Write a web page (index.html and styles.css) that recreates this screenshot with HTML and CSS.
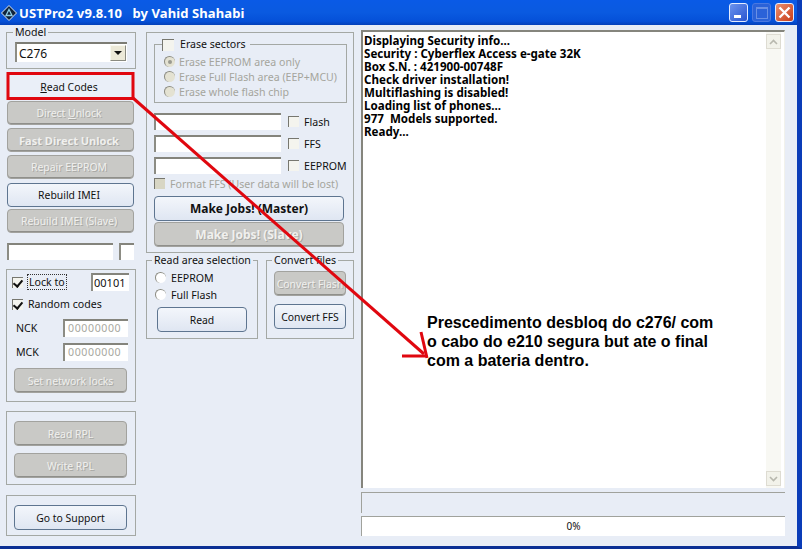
FILE: index.html
```html
<!DOCTYPE html>
<html lang="en">
<head>
    <meta charset="UTF-8">
    <title>USTPro2</title>
    <link rel="stylesheet" href="styles.css">
</head>
<body>

    <div class="window">
        <div class="titlebar">
            <svg class="app-icon" width="16" height="16" viewBox="0 0 16 16">
                <path d="M8 0.5 L15.5 8 L8 15.5 L0.5 8 Z" fill="#10243c" stroke="#dfe8f4" stroke-width="1"/>
                <path d="M8 4.5 L11 10.5 L5 10.5 Z" fill="none" stroke="#8fd0e8" stroke-width="1.3"/>
            </svg>
            <span class="title-text">USTPro2 v9.8.10&nbsp;&nbsp; by Vahid Shahabi</span>
            <div class="win-btns">
                <div class="win-btn min"><span class="min-bar"></span></div>
                <div class="win-btn max"><span class="max-box"></span></div>
                <div class="win-btn close">
                    <svg width="13" height="13" viewBox="0 0 13 13"><path d="M1.5 1.5 L11.5 11.5 M11.5 1.5 L1.5 11.5" stroke="#fff" stroke-width="2.4"/></svg>
                </div>
            </div>
        </div>

        <div class="client">
            <div class="col-left">
                <fieldset class="group model-group">
                    <legend>Model</legend>
                    <div class="combo">
                        <span class="combo-value">C276</span>
                        <span class="combo-btn"><span class="combo-arrow"></span></span>
                    </div>
                </fieldset>

                <button class="btn side read-codes"><u>R</u>ead Codes</button>
                <button class="btn side off direct">Direct <u>U</u>nlock</button>
                <button class="btn side off bold fast">Fast Direct Unlock</button>
                <button class="btn side off repair">Repair EEPROM</button>
                <button class="btn side rebuild">Rebuild IMEI</button>
                <button class="btn side off rebuild-slave">Rebuild IMEI (Slave)</button>

                <div class="imei-row">
                    <div class="field imei-a"></div>
                    <div class="field imei-b"></div>
                </div>

                <div class="box lock-box">
                    <div class="lock-row">
                        <label class="check-row"><span class="check on"></span><span class="focus-label">Lock to</span></label>
                        <div class="field lock-code">00101</div>
                    </div>
                    <label class="check-row random-row"><span class="check on"></span>Random codes</label>
                    <div class="code-row nck-row"><span>NCK</span><div class="field code-field">00000000</div></div>
                    <div class="code-row mck-row"><span>MCK</span><div class="field code-field">00000000</div></div>
                    <button class="btn off inner set-locks">Set network locks</button>
                </div>

                <div class="box rpl-box">
                    <button class="btn off inner">Read RPL</button>
                    <button class="btn off inner">Write RPL</button>
                </div>

                <div class="box support-box">
                    <button class="btn inner">Go to Support</button>
                </div>
            </div>

            <div class="col-mid">
                <div class="box main-box">
                    <fieldset class="group erase-group">
                        <legend><span class="check"></span>Erase sectors</legend>
                        <div class="radio-row dim"><span class="radio dot"></span>Erase EEPROM area only</div>
                        <div class="radio-row dim"><span class="radio"></span>Erase Full Flash area (EEP+MCU)</div>
                        <div class="radio-row dim"><span class="radio"></span>Erase whole flash chip</div>
                    </fieldset>

                    <div class="file-row"><div class="field file-field"></div><span class="check"></span>Flash</div>
                    <div class="file-row"><div class="field file-field"></div><span class="check"></span>FFS</div>
                    <div class="file-row"><div class="field file-field"></div><span class="check"></span>EEPROM</div>

                    <div class="format-row dim"><span class="check gray"></span>Format FFS (User data will be lost)</div>

                    <button class="btn bold jobs">Make Jobs! (Master)</button>
                    <button class="btn off bold jobs slave">Make Jobs! (Slave)</button>
                </div>

                <div class="mid-bottom">
                    <fieldset class="group area-group">
                        <legend>Read area selection</legend>
                        <div class="radio-row plain"><span class="radio white"></span>EEPROM</div>
                        <div class="radio-row plain"><span class="radio white"></span>Full Flash</div>
                        <button class="btn read-btn">Read</button>
                    </fieldset>
                    <fieldset class="group convert-group">
                        <legend>Convert files</legend>
                        <button class="btn off convert">Convert Flash</button>
                        <button class="btn convert ffs">Convert FFS</button>
                    </fieldset>
                </div>
            </div>

            <div class="col-right">
                <div class="log">
                    <div class="log-text">
                        Displaying Security info...<br>
                        Security : Cyberflex Access e-gate 32K<br>
                        Box S.N. : 421900-00748F<br>
                        Check driver installation!<br>
                        Multiflashing is disabled!<br>
                        Loading list of phones...<br>
                        977&nbsp; Models supported.<br>
                        Ready...
                    </div>
                    <div class="scrollbar">
                        <div class="scroll-btn">
                            <svg width="9" height="6" viewBox="0 0 9 6"><path d="M1 5 L4.5 1.5 L8 5" fill="none" stroke="#b8b8ae" stroke-width="1.6"/></svg>
                        </div>
                        <div class="scroll-btn">
                            <svg width="9" height="6" viewBox="0 0 9 6"><path d="M1 1 L4.5 4.5 L8 1" fill="none" stroke="#b8b8ae" stroke-width="1.6"/></svg>
                        </div>
                    </div>
                </div>
                <div class="status"></div>
                <div class="progress">0%</div>
            </div>
        </div>

        <!-- drawn on top of the screenshot -->
        <svg class="marks" width="802" height="549" viewBox="0 0 802 549">
            <rect x="8" y="73.5" width="125" height="25" fill="none" stroke="#e0070f" stroke-width="3"/>
            <path d="M133 98 L424 354" fill="none" stroke="#e0070f" stroke-width="3"/>
            <path d="M421 332 L427 358 M402 356 L427 356" fill="none" stroke="#e0070f" stroke-width="3"/>
        </svg>
        <p class="note">Prescedimento desbloq do c276/ com<br>o cabo do e210 segura but ate o final<br>com a bateria dentro.</p>
    </div>

</body>
</html>
```

FILE: styles.css
```css
* {
    box-sizing: border-box;
}

body {
    margin: 0;
    font-family: "Noto Sans", sans-serif;
    font-size: 10.6px;
    color: #111;
}

.window {
    position: relative;
    width: 802px;
    height: 549px;
    overflow: hidden;
    background: #e8edf6;
    border-right: 5px solid #0a3cb8;
    border-bottom: 3px solid #0b2f94;
}

.titlebar {
    display: flex;
    align-items: center;
    height: 25px;
    padding-left: 1px;
    background: linear-gradient(#0a5ae6 0%, #0a5ae0 50%, #0550d8 85%, #0440b8 100%);
}

.app-icon {
    flex: none;
}

.title-text {
    margin-left: 2px;
    color: #fff;
    font-size: 13px;
    font-weight: bold;
    letter-spacing: 0.1px;
    white-space: pre;
}

.win-btns {
    display: flex;
    gap: 4px;
    margin-left: auto;
    margin-right: 3px;
}

.win-btn {
    display: flex;
    align-items: center;
    justify-content: center;
    width: 19px;
    height: 19px;
    border: 1px solid #e4ecff;
    border-radius: 3px;
}

.min {
    align-items: flex-end;
    justify-content: flex-start;
    padding: 0 0 3px 4px;
    background: linear-gradient(135deg, #6b93ee, #2a55d0);
}

.min-bar {
    width: 7px;
    height: 3px;
    background: #fff;
}

.max {
    border-color: #4a78e0;
    background: #2b62d8;
}

.max-box {
    width: 12px;
    height: 12px;
    border: 1px solid #6a90e4;
    border-top-width: 2px;
}

.close {
    background: linear-gradient(135deg, #ea9070, #c83c18);
}

.client {
    display: flex;
    height: 521px;
    padding: 1px 0 0 6px;
}

.col-left {
    flex: none;
    width: 130px;
}

.col-mid {
    flex: none;
    width: 208px;
    margin-left: 10px;
}

.col-right {
    flex: none;
    width: 424px;
    margin-left: 7px;
    padding-top: 4px;
}

/* group boxes */
.group {
    margin: 0;
    padding: 0;
    border: 1px solid #a4a8a4;
    min-width: 0;
}

.group legend {
    margin-left: 5px;
    padding: 0 2px;
    line-height: 13px;
    white-space: nowrap;
}

.box {
    border: 1px solid #a4a8a4;
}

.model-group {
    height: 43px;
    padding: 3px 8px 0;
}

.model-group legend {
    margin-left: -2px;
}

.combo {
    display: flex;
    align-items: center;
    justify-content: space-between;
    width: 112px;
    height: 20px;
    padding: 1px 1px 1px 2px;
    background: #fff;
    border-top: 2px solid #7c7c74;
    border-left: 2px solid #8c8c84;
    font-size: 12px;
}

.combo-btn {
    display: flex;
    align-items: center;
    justify-content: center;
    width: 16px;
    height: 16px;
    background: #ece9d8;
    border: 1px solid #8a8a80;
    border-top-color: #f8f8f0;
    border-left-color: #f8f8f0;
}

.combo-arrow {
    border-top: 4px solid #111;
    border-left: 4px solid transparent;
    border-right: 4px solid transparent;
}

/* buttons */
.btn {
    display: block;
    width: 127px;
    height: 24px;
    margin: 0 0 3px 1px;
    padding: 0;
    border: 1px solid #5e7590;
    border-radius: 4px;
    background: linear-gradient(#f3f6fb, #dfe6f2);
    color: #111;
    font-family: inherit;
    font-size: 10.4px;
    white-space: nowrap;
    overflow: hidden;
}

.btn.side {
    padding-right: 3px;
}

.btn.off {
    border-color: #a2a29e;
    box-shadow: inset 0 -1px 0 #8f8f8b;
    background: #c9c9c6;
    color: #f0f0ee;
    text-shadow: 1px 1px 0 #a8a8a4;
}

.btn.bold {
    font-weight: bold;
    font-size: 11px;
}

.read-codes {
    height: 25px;
    margin-top: 5px;
    margin-bottom: 2px;
    background: #eaeff8;
    border-color: #eaeff8;
}

.rebuild {
    margin-top: 4px;
    margin-bottom: 2px;
}

.imei-row {
    display: flex;
    gap: 6px;
    margin: 10px 0 9px 1px;
}

.field {
    height: 17px;
    background: #fff;
    border-top: 2px solid #84847c;
    border-left: 2px solid #8c8c84;
}

.imei-a {
    width: 106px;
}

.imei-b {
    width: 15px;
}

.lock-box {
    height: 133px;
    padding: 3px 0 0 5px;
}

.lock-row {
    display: flex;
    justify-content: space-between;
    align-items: center;
    width: 117px;
}

.check-row {
    display: flex;
    align-items: center;
}

.check {
    display: inline-block;
    flex: none;
    position: relative;
    width: 11px;
    height: 11px;
    margin-right: 5px;
    background: #f4f4ee;
    border-top: 1px solid #77776f;
    border-left: 1px solid #77776f;
}

.check.on::after {
    content: "";
    position: absolute;
    left: 2px;
    top: 0;
    width: 4px;
    height: 7px;
    border: solid #111;
    border-width: 0 2px 2px 0;
    transform: rotate(40deg);
}

.check.gray {
    background: #d8d6c4;
}

.focus-label {
    outline: 1px dotted #333;
    padding: 0 1px;
}

.lock-code {
    width: 38px;
    height: 18px;
    padding-left: 1px;
    line-height: 15px;
    font-size: 11px;
}

.random-row {
    margin-top: 6px;
}

.code-row {
    display: flex;
    justify-content: space-between;
    align-items: center;
    width: 116px;
    padding-left: 4px;
    height: 18px;
}

.nck-row {
    margin-top: 8px;
}

.mck-row {
    margin-top: 6px;
}

.code-field {
    width: 65px;
    height: 18px;
    padding-left: 3px;
    color: #a8a8a0;
    line-height: 15px;
    letter-spacing: 0.6px;
}

.btn.inner {
    width: 113px;
    height: 25px;
    margin: 0 0 7px 7px;
}

.btn.inner.set-locks {
    margin: 7px 0 0 2px;
}

.rpl-box {
    height: 74px;
    margin-top: 9px;
    padding-top: 9px;
}

.support-box {
    height: 41px;
    margin-top: 10px;
    padding-top: 9px;
}

/* middle column */
.main-box {
    height: 221px;
    margin-top: 6px;
    padding: 0 0 0 7px;
}

.erase-group {
    width: 193px;
    height: 65px;
    margin: 5px 0 0;
}

.erase-group legend {
    display: flex;
    align-items: center;
    margin-left: 7px;
    padding: 0 4px 0 0;
    height: 13px;
}

.erase-group legend .check {
    width: 12px;
    height: 12px;
    margin-right: 6px;
}

.radio-row {
    display: flex;
    align-items: center;
    height: 15px;
    padding-left: 9px;
}

.erase-group .radio-row:first-of-type {
    margin-top: 3px;
}

.dim {
    color: #a5a59d;
}

.radio {
    position: relative;
    flex: none;
    width: 11px;
    height: 11px;
    margin-right: 4px;
    border-radius: 50%;
    background: #e4e2d2;
    border-top: 1px solid #8a8a80;
    border-left: 1px solid #8a8a80;
}

.radio.dot::after {
    content: "";
    position: absolute;
    left: 3px;
    top: 3px;
    width: 4px;
    height: 4px;
    border-radius: 50%;
    background: #9a9a90;
}

.radio.white {
    background: #fff;
    margin-right: 5px;
}

.file-row {
    display: flex;
    align-items: center;
    height: 17px;
    margin-top: 5px;
}

.erase-group + .file-row {
    margin-top: 10px;
}

.file-field {
    width: 127px;
    margin-right: 7px;
}

.file-row .check {
    margin-right: 5px;
}

.format-row {
    display: flex;
    align-items: center;
    height: 13px;
    margin-top: 3px;
}

.btn.jobs {
    width: 190px;
    height: 25px;
    margin: 6px 0 0;
    font-size: 12px;
}

.btn.jobs.slave {
    margin-top: 1px;
}

.mid-bottom {
    display: flex;
    justify-content: space-between;
    margin-top: 1px;
}

.area-group {
    width: 112px;
    height: 85px;
}

.plain {
    padding-left: 8px;
    height: 17px;
}

.area-group .plain:first-of-type {
    margin-top: 2px;
}

.btn.read-btn {
    width: 90px;
    height: 25px;
    margin: 4px 0 0 10px;
}

.convert-group {
    width: 88px;
    height: 85px;
}

.btn.convert {
    width: 72px;
    height: 25px;
    margin: 4px 0 0 7px;
}

.btn.convert.ffs {
    margin-top: 8px;
}

/* right column */
.log {
    display: flex;
    height: 458px;
    background: #fff;
    border-top: 2px solid #85857d;
    border-left: 2px solid #85857d;
    border-right: 1px solid #f2f2ec;
    padding-right: 3px;
}

.log-text {
    flex: 1;
    padding: 2px 0 0 1px;
    font-size: 11.6px;
    font-weight: bold;
    line-height: 13px;
    color: #000;
}

.scrollbar {
    display: flex;
    flex-direction: column;
    justify-content: space-between;
    width: 15px;
    padding: 2px 0;
    background: #f8f8f3;
}

.scroll-btn {
    display: flex;
    align-items: center;
    justify-content: center;
    height: 15px;
    background: #f2f2ea;
    border: 1px solid #dedcd2;
}

.status {
    height: 21px;
    margin-top: 4px;
    border-top: 1px solid #a0a29c;
    border-left: 1px solid #a0a29c;
}

.progress {
    height: 20px;
    margin-top: 3px;
    background: #fff;
    border-top: 1px solid #a0a29c;
    border-left: 1px solid #a0a29c;
    text-align: center;
    line-height: 19px;
    font-size: 10px;
}

/* annotation */
.marks {
    position: absolute;
    left: 0;
    top: 0;
    pointer-events: none;
}

.note {
    position: absolute;
    left: 427px;
    top: 313px;
    margin: 0;
    font-family: "Liberation Sans", Arial, sans-serif;
    font-size: 16px;
    font-weight: bold;
    line-height: 19px;
    color: #000;
    white-space: nowrap;
}
```
